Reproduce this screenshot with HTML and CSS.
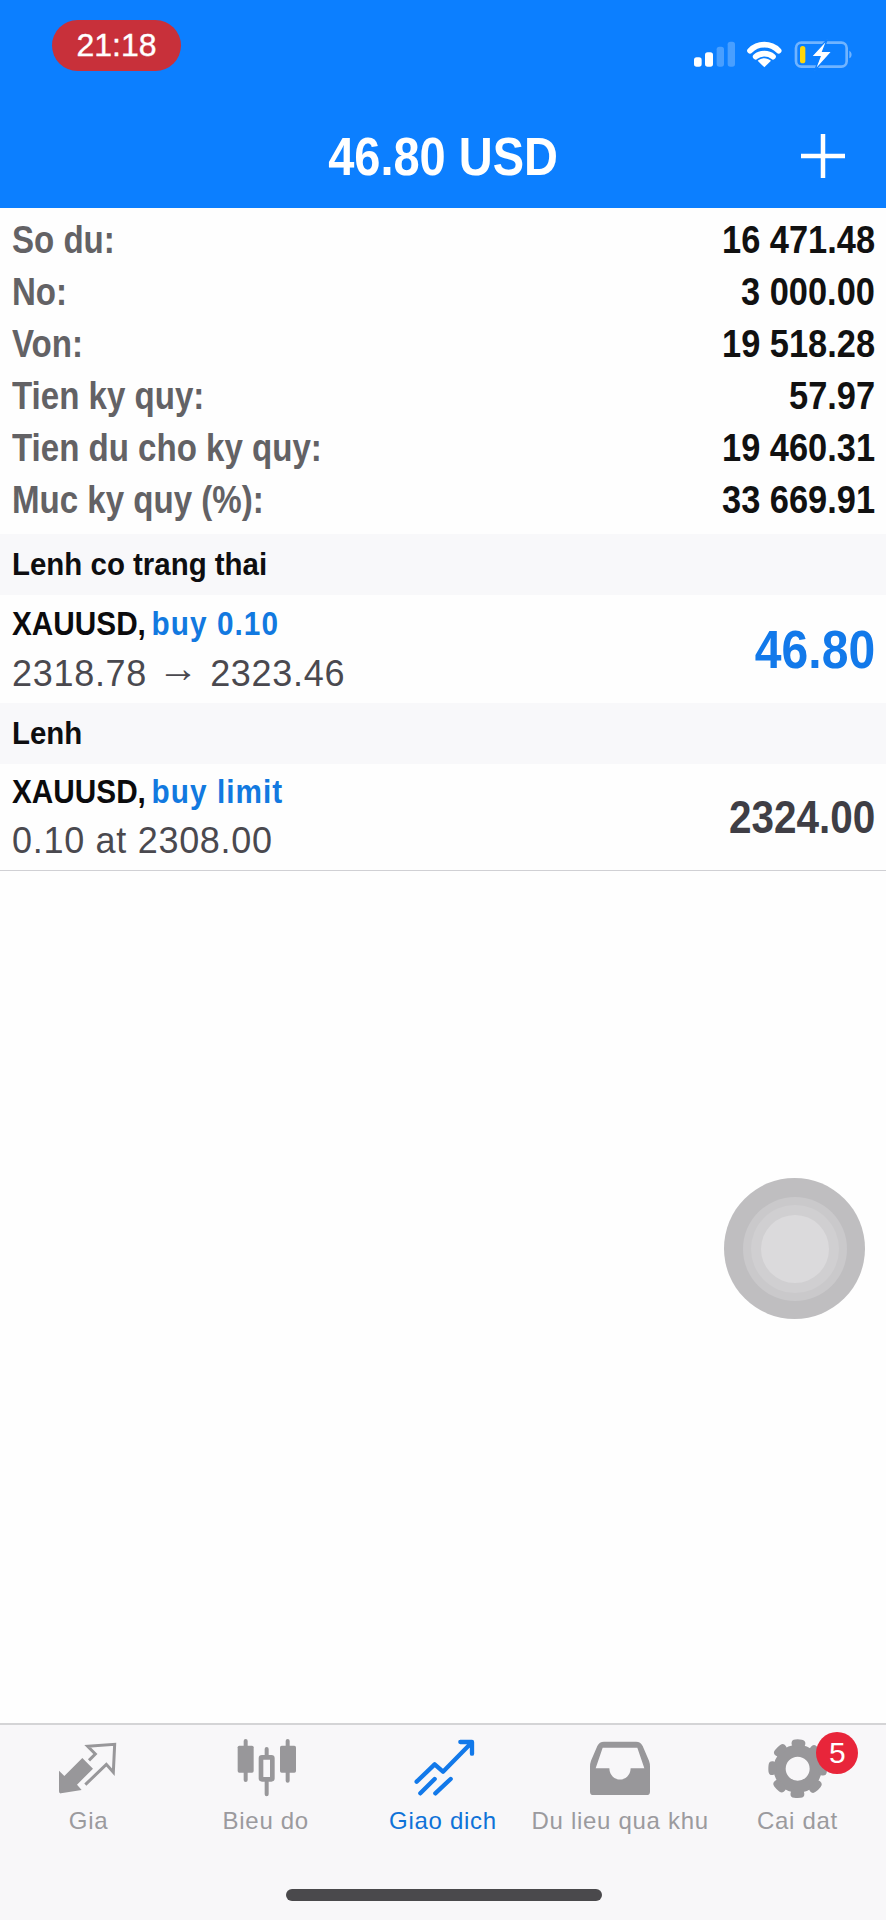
FILE: index.html
```html
<!DOCTYPE html>
<html lang="vi">
<head>
<meta charset="utf-8">
<title>Giao dich</title>
<link rel="stylesheet" href="styles.css">
</head>
<body>
<div class="screen">
  <header class="header">
    <div class="status">
      <div class="clock">21:18</div>
      <svg class="status-icons" viewBox="0 0 600 180">
        <rect x="72" y="112" width="23" height="28" rx="8" fill="#fff"/>
        <rect x="105" y="97" width="24" height="43" rx="8" fill="#fff"/>
        <rect x="140" y="80" width="22" height="60" rx="8" fill="#fff" fill-opacity=".25"/>
        <rect x="173" y="65" width="22" height="75" rx="8" fill="#fff" fill-opacity=".25"/>
        <path d="M240 92C264 68 302 68 326 92M257 110C271 98 295 98 309 110" fill="none" stroke="#fff" stroke-width="17" stroke-linecap="round"/>
        <path d="M283 142L263 122C275 112 291 112 303 122Z" fill="#fff"/>
        <rect x="378" y="68" width="152" height="72" rx="16" fill="none" stroke="#fff" stroke-opacity=".42" stroke-width="8"/>
        <path d="M538 92C546 96 548 110 538 115Z" fill="#fff" fill-opacity=".42"/>
        <rect x="390" y="78" width="16" height="52" rx="8" fill="#ffd60a"/>
        <path d="M472 58L424 110H450L434 152L486 94H458Z" fill="#fff" stroke="#0c7fff" stroke-width="4"/>
      </svg>
    </div>
    <div class="titlebar">
      <span></span>
      <h1 class="title">46.80 USD</h1>
      <svg class="plus" viewBox="0 0 44 44"><path d="M22 0V44M0 22H44" stroke="#fff" stroke-width="4.5"/></svg>
    </div>
  </header>

  <main class="content">
    <section class="summary">
      <div class="info-row"><span class="label">So du:</span><span class="value">16 471.48</span></div>
      <div class="info-row"><span class="label">No:</span><span class="value">3 000.00</span></div>
      <div class="info-row"><span class="label">Von:</span><span class="value">19 518.28</span></div>
      <div class="info-row"><span class="label">Tien ky quy:</span><span class="value">57.97</span></div>
      <div class="info-row"><span class="label">Tien du cho ky quy:</span><span class="value">19 460.31</span></div>
      <div class="info-row"><span class="label">Muc ky quy (%):</span><span class="value">33 669.91</span></div>
    </section>

    <h2 class="section-head"><span class="section-text">Lenh co trang thai</span></h2>
    <div class="order">
      <div class="order-main">
        <div class="order-title">XAUUSD, <span class="accent">buy 0.10</span></div>
        <div class="order-sub">2318.78 <span class="arrow">→</span> 2323.46</div>
      </div>
      <div class="profit">46.80</div>
    </div>

    <h2 class="section-head"><span class="section-text">Lenh</span></h2>
    <div class="order order-last">
      <div class="order-main">
        <div class="order-title">XAUUSD, <span class="accent">buy limit</span></div>
        <div class="order-sub">0.10 at 2308.00</div>
      </div>
      <div class="price">2324.00</div>
    </div>

    <div class="touch">
      <div class="touch-a"><div class="touch-b"><div class="touch-c"></div></div></div>
    </div>
  </main>

  <footer class="tabbar">
    <nav class="tabs">
      <div class="tab">
        <svg class="tab-icon" viewBox="0 0 240 210">
          <path d="M30 122L46 138L100 84L132 116L84 164L98 180L36 190Q30 191 30 184Z" fill="#98979a"/>
          <path d="M120 91L139 72L116 49L197 43L193 127L172 103L109 164" fill="none" stroke="#98979a" stroke-width="9"/>
        </svg>
        <span class="tab-label">Gia</span>
      </div>
      <div class="tab">
        <svg class="tab-icon" viewBox="0 0 240 210">
          <path d="M59 33V150M185 33V152M122 57V75M122 155V193" stroke="#98979a" stroke-width="12" stroke-linecap="round"/>
          <rect x="35" y="47" width="48" height="81" rx="5" fill="#98979a"/>
          <rect x="162" y="47" width="48" height="81" rx="5" fill="#98979a"/>
          <rect x="105" y="82" width="34" height="66" rx="3" fill="none" stroke="#98979a" stroke-width="14"/>
        </svg>
        <span class="tab-label">Bieu do</span>
      </div>
      <div class="tab tab-active">
        <svg class="tab-icon" viewBox="0 0 240 210">
          <path d="M41 155L95 103L120 125L204 40M172 36H207V71M52 190L95 147M97 190L143 147" fill="none" stroke="#1279ea" stroke-width="13" stroke-linecap="round" stroke-linejoin="round"/>
        </svg>
        <span class="tab-label">Giao dich</span>
      </div>
      <div class="tab">
        <svg class="tab-icon" viewBox="0 0 240 210">
          <path fill-rule="evenodd" d="M72 35H168Q182 35 188 48L207 92Q210 100 210 110V185Q210 195 200 195H40Q30 195 30 185V110Q30 100 33 92L52 48Q58 35 72 35ZM68 53L47 115H88C90 160 150 160 152 115H193L172 53Z" fill="#98979a"/>
        </svg>
        <span class="tab-label">Du lieu qua khu</span>
      </div>
      <div class="tab">
        <div class="gear-wrap">
          <svg class="tab-icon" viewBox="0 0 240 210">
            <circle cx="122" cy="116" r="54" fill="none" stroke="#98979a" stroke-width="36"/>
            <circle cx="122" cy="116" r="76" fill="none" stroke="#98979a" stroke-width="24" stroke-dasharray="18 41.7" stroke-dashoffset="9" stroke-linecap="round"/>
          </svg>
          <span class="badge">5</span>
        </div>
        <span class="tab-label">Cai dat</span>
      </div>
    </nav>
    <div class="home-bar"></div>
  </footer>
</div>
</body>
</html>
```
FILE: styles.css
```css
* { box-sizing: border-box; }
html, body { margin: 0; padding: 0; }
body { background: #fff; font-family: "Liberation Sans", Arial, sans-serif; }

.screen {
  position: relative;
  width: 886px;
  height: 1920px;
  display: flex;
  flex-direction: column;
  overflow: hidden;
}

.header {
  height: 208px;
  flex: none;
  background: #0c7fff;
  padding-top: 20px;
}
.status {
  display: flex;
  justify-content: space-between;
  align-items: flex-start;
  padding: 0 16px 0 52px;
}
.clock {
  width: 129px;
  height: 51px;
  border-radius: 26px;
  background: #c8303a;
  color: #fff;
  font-size: 32px;
  line-height: 51px;
  text-align: center;
  -webkit-text-stroke: .4px #fff;
}
.status-icons { width: 200px; height: 60px; display: block; }
.titlebar {
  display: grid;
  grid-template-columns: 1fr auto 1fr;
  align-items: center;
  height: 48px;
  margin-top: 52px;
}
.title {
  margin: 0;
  color: #fff;
  font-size: 54px;
  line-height: 48px;
  font-weight: 700;
  white-space: nowrap;
  transform: scaleX(.87);
}
.plus { width: 44px; height: 44px; justify-self: end; margin-right: 41px; }

.content { position: relative; flex: 1; background: #fefefe; }

.summary { padding: 6px 11px 8px 12px; }
.info-row {
  height: 52px;
  display: flex;
  justify-content: space-between;
  align-items: center;
  font-weight: 700;
  white-space: nowrap;
}
.label {
  display: inline-block;
  font-size: 38px;
  color: #636265;
  transform: scaleX(.87);
  transform-origin: left center;
}
.value {
  display: inline-block;
  font-size: 38px;
  color: #111;
  transform: scaleX(.905);
  transform-origin: right center;
}

.section-head {
  margin: 0;
  height: 61px;
  padding: 0 12px;
  display: flex;
  align-items: center;
  background: #f8f8fa;
  font-size: 32px;
  font-weight: 700;
  color: #0e0e10;
}
.section-text {
  display: inline-block;
  white-space: nowrap;
  transform: scaleX(.92);
  transform-origin: left center;
}

.order {
  height: 108px;
  padding: 0 11px 0 12px;
  display: flex;
  justify-content: space-between;
  align-items: center;
  white-space: nowrap;
}
.order-last { height: 107px; border-bottom: 1px solid #d0d0d4; }
.order-main { padding-bottom: 2px; }
.order-title {
  font-size: 34px;
  line-height: 50px;
  font-weight: 700;
  color: #0b0b0d;
  transform: scaleX(.875);
  transform-origin: left center;
}
.accent { color: #1279e0; letter-spacing: 1.2px; margin-left: -3px; }
.order-sub {
  font-size: 36px;
  line-height: 50px;
  letter-spacing: .7px;
  color: #4a494f;
}
.arrow { font-size: 41px; line-height: 1; vertical-align: 4px; }
.profit, .price {
  font-weight: 700;
  transform-origin: right center;
}
.profit { font-size: 54px; color: #1279ea; transform: scaleX(.89); }
.price { font-size: 46px; color: #3f3e45; transform: scaleX(.88); }

.touch {
  position: absolute;
  left: 724px;
  top: 970px;
  width: 141px;
  height: 141px;
  border-radius: 50%;
  background: #bfbec0;
  display: flex;
  align-items: center;
  justify-content: center;
}
.touch-a {
  width: 104px;
  height: 104px;
  border-radius: 50%;
  background: #cac9cb;
  display: flex;
  align-items: center;
  justify-content: center;
}
.touch-b {
  width: 88px;
  height: 88px;
  border-radius: 50%;
  background: #d0cfd1;
  display: flex;
  align-items: center;
  justify-content: center;
}
.touch-c {
  width: 68px;
  height: 68px;
  border-radius: 50%;
  background: #dbdadc;
}

.tabbar {
  height: 197px;
  flex: none;
  background: #f8f7f9;
  border-top: 2px solid #d4d4d6;
}
.tabs {
  display: grid;
  grid-template-columns: repeat(5, 1fr);
  padding-top: 5px;
  height: 164px;
}
.tab {
  display: flex;
  flex-direction: column;
  align-items: center;
  color: #9b9a9e;
}
.tab-active { color: #0f72d8; }
.tab-icon { display: block; width: 80px; height: 70px; }
.tab-label {
  margin-top: 6px;
  font-size: 24px;
  line-height: 30px;
  letter-spacing: .7px;
  white-space: nowrap;
}
.gear-wrap { position: relative; width: 80px; height: 70px; }
.badge {
  position: absolute;
  left: 59px;
  top: 2px;
  width: 42px;
  height: 42px;
  border-radius: 50%;
  background: #e8253a;
  color: #fff;
  font-size: 30px;
  line-height: 42px;
  text-align: center;
}
.home-bar {
  width: 316px;
  height: 12px;
  margin-left: 286px;
  border-radius: 6px;
  background: #4a494c;
}
```
